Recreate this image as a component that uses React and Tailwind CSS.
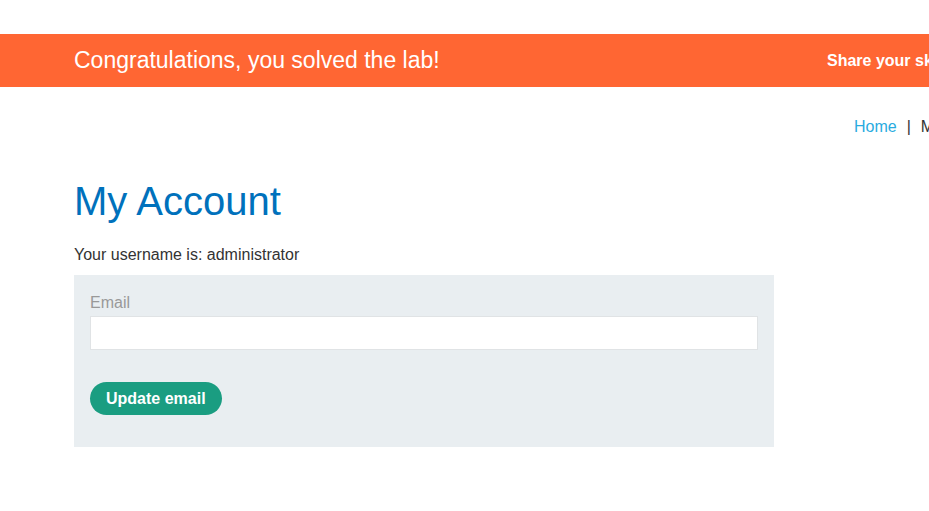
export default function App() {
  return (
    <div className="w-[929px] h-[511px] overflow-hidden bg-white font-['Liberation_Sans',Arial,sans-serif] text-[#333]">
      <div className="h-[34px]" />
      <div className="h-[53px] bg-[#ff6633] flex items-center whitespace-nowrap text-white">
        <span className="pl-[74px] w-[827px] shrink-0 text-[23px] leading-none">Congratulations, you solved the lab!</span>
        <span className="shrink-0 text-[16px] font-bold">Share your skills!</span>
      </div>

      <div className="flex whitespace-nowrap text-[16px] mt-[30px] h-[20px] items-center">
        <span className="w-[854px] shrink-0" />
        <a className="text-[#29abe0]">Home</a>
        <span className="px-[10px]">|</span>
        <a>My account</a>
      </div>

      <div className="pl-[74px] mt-[39px]">
        <h1 className="text-[40px] leading-[50px] text-[#0071bc]">My Account</h1>
        <p className="mt-[19px] text-[16px] leading-[20px]">Your username is: administrator</p>
        <form className="mt-[10px] w-[700px] h-[172px] bg-[#e9eef1] px-[16px] pt-[18px]">
          <label className="block text-[16px] leading-[20px] text-[#999]">Email</label>
          <input className="block mt-[3px] w-full h-[34px] bg-white border border-[#e0e3e5] outline-none" />
          <button
            type="button"
            className="mt-[32px] h-[33px] px-[16px] rounded-full bg-[#1a9d81] text-white font-bold text-[16px]"
          >
            Update email
          </button>
        </form>
      </div>
    </div>
  );
}
